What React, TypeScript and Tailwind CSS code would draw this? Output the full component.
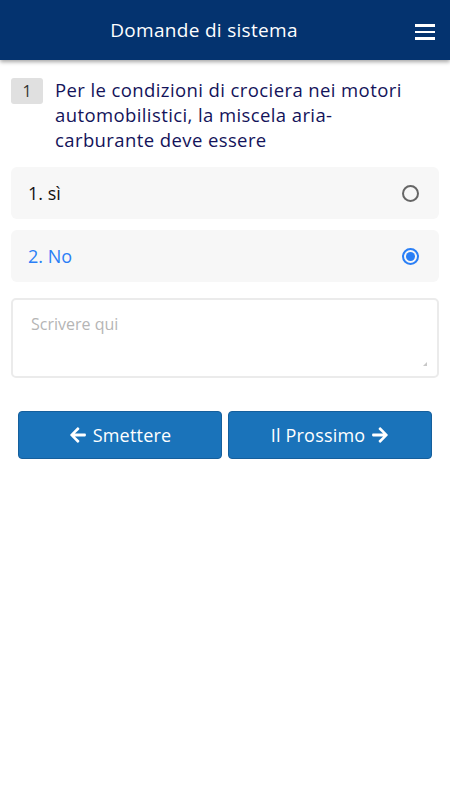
import React from "react";
import { FaArrowLeft, FaArrowRight } from "react-icons/fa";

export default function App() {
  const font = { fontFamily: "'Open Sans', 'Noto Sans', sans-serif" };
  return (
    <div className="w-[450px] h-[800px] bg-white" style={font}>
      <header className="h-[60px] bg-[#04336f] flex items-center justify-center relative shadow-[0_2px_4px_rgba(0,0,0,0.35)]">
        <h1 className="text-white text-[19px] tracking-[0.3px] ml-[-42px]">Domande di sistema</h1>
        <div className="absolute right-[15px] top-[24px] flex flex-col gap-[4px]">
          <span className="block w-[20px] h-[2.5px] bg-white" />
          <span className="block w-[20px] h-[2.5px] bg-white" />
          <span className="block w-[20px] h-[2.5px] bg-white" />
        </div>
      </header>

      <div className="px-[11px] pt-[18px]">
        <div className="flex gap-[12px]">
          <div className="w-[32px] h-[26px] shrink-0 rounded-[3px] bg-[#e0e0e0] flex items-center justify-center text-[16px] text-[#333]">1</div>
          <p className="text-[18.5px] leading-[25px] tracking-[0.4px] text-[#13135a] pr-[10px] mt-[-1px]">
            Per le condizioni di crociera nei motori automobilistici, la miscela aria-carburante deve essere
          </p>
        </div>

        <div className="mt-[15px] flex flex-col gap-[11px]">
          <div className="h-[52px] rounded-[6px] bg-[#f7f7f7] flex items-center justify-between pl-[17px] pr-[20px]">
            <span className="text-[18px] text-[#111]">1. sì</span>
            <span className="w-[17px] h-[17px] rounded-full border-2 border-[#666]" />
          </div>
          <div className="h-[52px] rounded-[6px] bg-[#f7f7f7] flex items-center justify-between pl-[17px] pr-[20px]">
            <span className="text-[18px] text-[#2a7ff6]">2. No</span>
            <span className="w-[17px] h-[17px] rounded-full border-2 border-[#2a7ff6] flex items-center justify-center">
              <span className="w-[9px] h-[9px] rounded-full bg-[#2a7ff6]" />
            </span>
          </div>
        </div>

        <div className="relative mt-[16px]">
          <textarea
            placeholder="Scrivere qui"
            className="block w-full h-[80px] rounded-[5px] border-2 border-[#ebebeb] px-[18px] py-[12px] text-[16px] placeholder:text-[#b5b5b5] outline-none resize-none"
          />
          <svg className="absolute right-[12px] bottom-[12px]" width="4" height="4" viewBox="0 0 4 4">
            <path d="M4 0 L4 4 L0 4 Z" fill="#c8c8c8" />
          </svg>
        </div>

        <div className="mt-[33px] px-[7px] flex gap-[6px]">
          <button className="flex-1 h-[48px] rounded-[4px] bg-[#1a73ba] border border-[#155f9c] text-white text-[18px] tracking-[0.2px] flex items-center justify-center gap-[6px]">
            <FaArrowLeft className="w-[18px] h-[18px]" />
            Smettere
          </button>
          <button className="flex-1 h-[48px] rounded-[4px] bg-[#1a73ba] border border-[#155f9c] text-white text-[18px] tracking-[0.2px] flex items-center justify-center gap-[6px]">
            Il Prossimo
            <FaArrowRight className="w-[18px] h-[18px]" />
          </button>
        </div>
      </div>
    </div>
  );
}
